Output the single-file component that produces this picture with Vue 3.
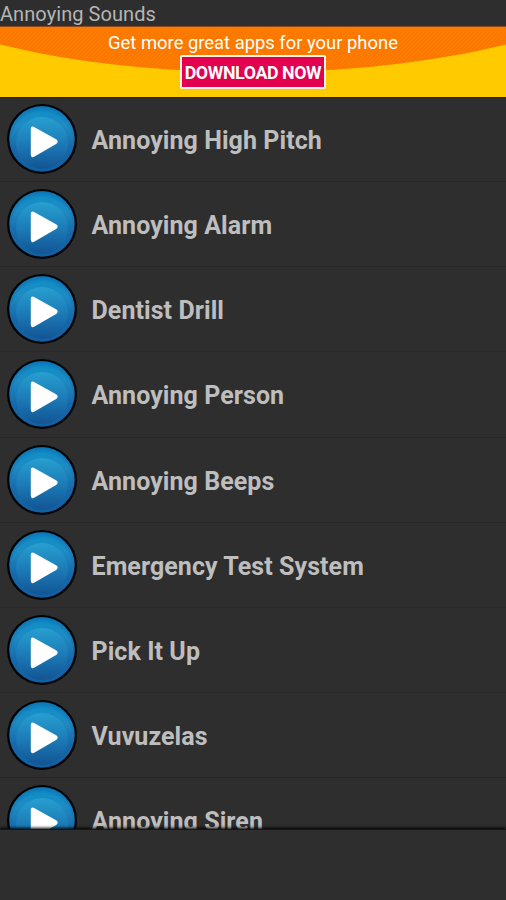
<script setup>
const sounds = [
  'Annoying High Pitch',
  'Annoying Alarm',
  'Dentist Drill',
  'Annoying Person',
  'Annoying Beeps',
  'Emergency Test System',
  'Pick It Up',
  'Vuvuzelas',
  'Annoying Siren',
]
</script>

<template>
  <div class="screen">
    <header class="title">Annoying Sounds</header>
    <section class="banner">
      <svg class="banner-art" viewBox="0 0 506 71" preserveAspectRatio="none" aria-hidden="true">
        <defs>
          <pattern id="hatch" width="4" height="4" patternUnits="userSpaceOnUse">
            <rect width="4" height="4" fill="#ff7c00" />
            <path d="M-1 1L1-1M0 4L4 0M3 5L5 3" stroke="#f87500" stroke-width="1.2" />
          </pattern>
        </defs>
        <rect width="506" height="71" fill="#ffcb00" />
        <path d="M0 0H506V18.500C356 55.500 150 55.500 0 18.500Z" fill="url(#hatch)" />
        <rect width="506" height="1" fill="#8c4a1c" />
      </svg>
      <div class="banner-body">
        <p class="tagline">Get more great apps for your phone</p>
        <button class="download">DOWNLOAD NOW</button>
      </div>
    </section>
    <ul class="list">
      <li v-for="sound in sounds" :key="sound" class="row">
        <svg class="play" viewBox="0 0 70 70" aria-hidden="true">
          <defs>
            <linearGradient id="ring" x1="0" y1="0" x2="0" y2="1">
              <stop offset="0" stop-color="#0c8fc9" />
              <stop offset=".3" stop-color="#1f8bc2" />
              <stop offset=".65" stop-color="#1768a8" />
              <stop offset="1" stop-color="#1060a4" />
            </linearGradient>
            <radialGradient id="edge" cx=".5" cy=".56" r=".55">
              <stop offset=".84" stop-color="#1060a5" stop-opacity="0" />
              <stop offset="1" stop-color="#0a5ca8" stop-opacity=".5" />
            </radialGradient>
            <linearGradient id="face" x1="0" y1="0" x2="0" y2="1">
              <stop offset="0" stop-color="#279fd0" />
              <stop offset=".5" stop-color="#1c7cb7" />
              <stop offset="1" stop-color="#125493" />
            </linearGradient>
          </defs>
          <circle cx="35" cy="35" r="35" fill="#020508" />
          <circle cx="35" cy="35" r="32.700" fill="url(#ring)" />
          <circle cx="35" cy="35" r="32.700" fill="url(#edge)" />
          <circle cx="35" cy="39" r="26" fill="url(#face)" />
          <path d="M26.500 24L48.500 36.300Q50.500 37.500 48.500 38.900L26.500 51.700Q25 52.500 25 50.800V25Q25 23.200 26.500 24Z" fill="#fff" stroke="#fff" stroke-width="2.400" stroke-linejoin="round" />
        </svg>
        <span class="name">{{ sound }}</span>
      </li>
    </ul>
    <footer class="footer"></footer>
  </div>
</template>

<style>
body {
  margin: 0;
  background: #2e2e2e;
}
</style>

<style scoped>
.screen {
  display: flex;
  flex-direction: column;
  width: 506px;
  height: 900px;
  overflow: hidden;
  background: #2e2e2e;
  font-family: Roboto, sans-serif;
}
.title {
  flex: none;
  height: 26px;
  line-height: 29px;
  font-size: 20px;
  letter-spacing: 0.07px;
  color: #b5b5b5;
  white-space: nowrap;
}
.banner {
  flex: none;
  display: grid;
  height: 71px;
}
.banner-art,
.banner-body {
  grid-area: 1 / 1;
  width: 506px;
  height: 71px;
}
.banner-body {
  z-index: 1;
  display: flex;
  flex-direction: column;
  align-items: center;
}
.tagline {
  margin: 0;
  padding-top: 5px;
  height: 24px;
  line-height: 24px;
  font-size: 18.4px;
  color: #fff;
  white-space: nowrap;
}
.download {
  box-sizing: border-box;
  display: flex;
  justify-content: center;
  width: 146px;
  height: 34px;
  padding: 0;
  border: 2px solid #fff3e8;
  border-radius: 2px;
  background: #e2004f;
  color: #fff;
  font: 700 17.8px/31px Roboto, sans-serif;
  letter-spacing: -0.4px;
  white-space: nowrap;
}
.list {
  flex: none;
  height: 732px;
  margin: 0;
  padding: 0;
  overflow: hidden;
  list-style: none;
  box-shadow: inset 0 1px #222;
}
.row {
  box-sizing: border-box;
  display: flex;
  align-items: center;
  gap: 14.5px;
  height: 85.14px;
  padding-left: 7px;
  border-bottom: 1px solid #272727;
}
.play {
  flex: none;
  width: 70px;
  height: 70px;
}
.name {
  padding-top: 3px;
  font-size: 25px;
  font-weight: 700;
  letter-spacing: 0.07px;
  color: #bebebe;
  white-space: nowrap;
}
.footer {
  z-index: 1;
  flex: 1;
  border-top: 1px solid #161616;
  background: #2e2e2e;
  box-shadow: 0 -1px 3px #000;
}
</style>
